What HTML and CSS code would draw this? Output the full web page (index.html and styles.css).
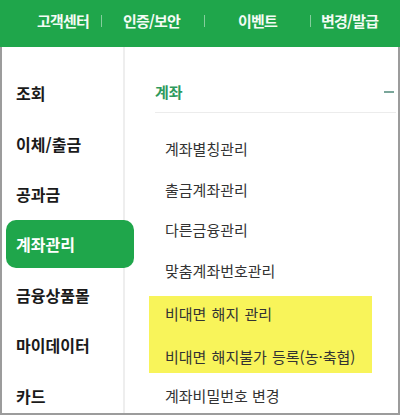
FILE: index.html
```html
<!DOCTYPE html>
<html lang="ko">
<head>
<meta charset="utf-8">
<link rel="stylesheet" href="styles.css">
</head>
<body>
<header class="topbar">
  <nav class="topnav">
    <span class="tn tn-1">고객센터</span>
    <span class="sep sep-1"></span>
    <span class="tn tn-2">인증/보안</span>
    <span class="sep sep-2"></span>
    <span class="tn tn-3">이벤트</span>
    <span class="sep sep-3"></span>
    <span class="tn tn-4">변경/발급</span>
  </nav>
</header>
<main class="main">
  <aside class="side">
    <div class="side-item">조회</div>
    <div class="side-item">이체/출금</div>
    <div class="side-item">공과금</div>
    <div class="side-item active"><span class="pill">계좌관리</span></div>
    <div class="side-item">금융상품몰</div>
    <div class="side-item">마이데이터</div>
    <div class="side-item">카드</div>
  </aside>
  <section class="panel">
    <div class="panel-head">
      <span class="panel-title">계좌</span>
      <span class="minus"></span>
    </div>
    <ul class="list">
      <li class="item">계좌별칭관리</li>
      <li class="item">출금계좌관리</li>
      <li class="item">다른금융관리</li>
      <li class="item">맞춤계좌번호관리</li>
      <li class="hl">
        <div class="hl-item">비대면 해지 관리</div>
        <div class="hl-item">비대면 해지불가 등록(농·축협)</div>
      </li>
      <li class="item last">계좌비밀번호 변경</li>
    </ul>
  </section>
</main>
</body>
</html>
```
FILE: styles.css
```css
* { box-sizing: border-box; }
html, body { margin: 0; padding: 0; }
body {
  width: 400px;
  height: 415px;
  overflow: hidden;
  background: #fff;
  font-family: "Noto Sans CJK KR", "Noto Sans", sans-serif;
  color: #222;
}
.topbar {
  height: 47px;
  background: #1fa64b;
}
.topnav {
  display: flex;
  align-items: center;
  height: 41px;
  padding-left: 37px;
}
.tn {
  color: #f4fbf5;
  font-size: 15px;
  font-weight: 700;
  letter-spacing: -0.8px;
  line-height: 20px;
}
.sep {
  width: 1px;
  height: 12px;
  background: rgba(255,255,255,0.45);
}
.sep-1 { margin: 0 21px 0 12px; }
.sep-2 { margin: 0 33px 0 24px; }
.sep-3 { margin: 0 10px 0 33px; }

.main {
  display: flex;
  height: 368px;
  border: 2px solid #9c9c9c;
  border-top: none;
}
.side {
  width: 123px;
  flex: none;
  padding-top: 20.75px;
  border-right: 2px solid #eeeeee;
}
.side-item {
  height: 50.5px;
  display: flex;
  align-items: center;
  padding-left: 14px;
  font-size: 16px;
  font-weight: 700;
  color: #1a1a1a;
}
.side-item.active {
  height: auto;
  padding-left: 4px;
  margin: 0.75px 0 1.25px;
}
.pill {
  position: relative;
  z-index: 1;
  flex: none;
  display: flex;
  align-items: center;
  width: 128px;
  height: 48px;
  padding-left: 10px;
  background: #1fa64b;
  border-radius: 10px;
  color: #fff;
}
.panel {
  flex: 1;
  padding: 0 2px 0 30px;
}
.panel-head {
  display: flex;
  align-items: center;
  justify-content: space-between;
  height: 42px;
  margin-top: 24px;
  border-bottom: 1px solid #ececec;
}
.panel-title {
  color: #2e9a5c;
  font-size: 15px;
  font-weight: 700;
}
.minus {
  width: 10px;
  height: 2px;
  margin-right: 2px;
  background: #7aa69a;
}
.list {
  list-style: none;
  margin: 0;
  padding: 16px 0 0;
}
.item {
  padding: 10.25px 0 10.25px 10px;
  line-height: 20px;
  font-size: 15px;
  color: #333;
}
.hl {
  width: 223px;
  margin: 5px 0 0 -6px;
  padding: 8px 0 6px 16px;
  background: #f8f45a;
}
.hl-item {
  line-height: 20px;
  font-size: 15px;
  color: #333;
  word-spacing: 1px;
}
.hl-item + .hl-item { margin-top: 23px; }
.item.last {
  padding-top: 13px;
}
```
